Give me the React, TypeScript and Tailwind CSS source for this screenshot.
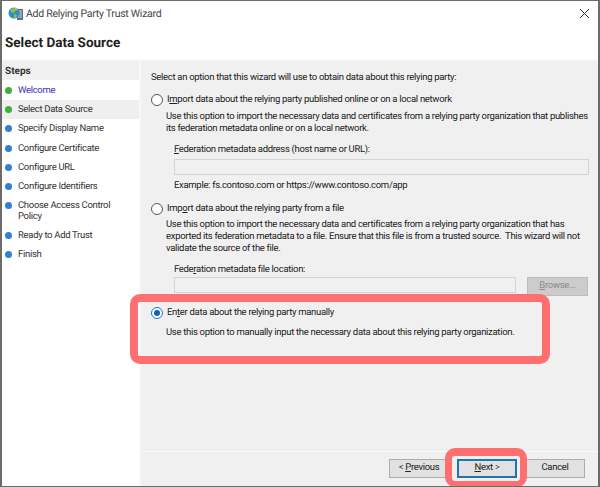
import React from 'react';

const steps = [
  { label: 'Welcome', color: 'bg-[#3fae3a]', text: 'text-[#3a2fc0]' },
  { label: 'Select Data Source', color: 'bg-[#3fae3a]', text: 'text-[#333]', active: true },
  { label: 'Specify Display Name', color: 'bg-[#2f7fd8]', text: 'text-[#333]' },
  { label: 'Configure Certificate', color: 'bg-[#2f7fd8]', text: 'text-[#333]' },
  { label: 'Configure URL', color: 'bg-[#2f7fd8]', text: 'text-[#333]' },
  { label: 'Configure Identifiers', color: 'bg-[#2f7fd8]', text: 'text-[#333]' },
  { label: 'Choose Access Control Policy', color: 'bg-[#2f7fd8]', text: 'text-[#333]' },
  { label: 'Ready to Add Trust', color: 'bg-[#2f7fd8]', text: 'text-[#333]' },
  { label: 'Finish', color: 'bg-[#2f7fd8]', text: 'text-[#333]' },
];

function Radio({ checked }: { checked?: boolean }) {
  return (
    <span className={`flex h-[12px] w-[12px] shrink-0 items-center justify-center rounded-full border bg-white ${checked ? 'border-[#1f74c8]' : 'border-[#555]'}`}>
      {checked && <span className="h-[6px] w-[6px] rounded-full bg-[#0f62b8]" />}
    </span>
  );
}

function Option({ checked, children }: { checked?: boolean; children: React.ReactNode }) {
  return (
    <div className="flex items-center gap-[4px] pl-[10px] leading-[14px]">
      <Radio checked={checked} />
      <span>{children}</span>
    </div>
  );
}

function WizardIcon() {
  return (
    <svg width="16" height="16" viewBox="0 0 16 16" className="shrink-0">
      <rect x="9" y="3" width="6" height="11" fill="#5b6f88" />
      <path d="M10 5h4M10 7h4M10 9h4M10 11h4" stroke="#c9d6e4" strokeWidth="1" />
      <circle cx="6" cy="7" r="5.5" fill="#2b8fc4" />
      <path d="M2 4l3-2 3 1-1 3-3 1zM6 8l3 1-1 3-2 1z" fill="#8cc04a" />
      <path d="M7 1.5l3 1-1 2-2-1z" fill="#e8b93a" />
    </svg>
  );
}

function Button({ children, primary, disabled, className = '' }: { children: React.ReactNode; primary?: boolean; disabled?: boolean; className?: string }) {
  const look = disabled
    ? 'border-[#bdbdbd] bg-[#cccccc] text-[#8a8a8a]'
    : primary
      ? 'border-2 border-[#1f74b8] bg-[#e1e1e1] text-[#222]'
      : 'border-[#adadad] bg-[#e1e1e1] text-[#222]';
  return <div className={`flex h-[19px] items-center justify-center border ${look} ${className}`}>{children}</div>;
}

function Field({ className = '' }: { className?: string }) {
  return <div className={`h-[16px] border border-[#d4d4d4] bg-[#f0f0f0] ${className}`} />;
}

export default function App() {
  return (
    <div className="relative flex h-[487px] w-[600px] flex-col overflow-hidden border-x-2 border-y border-[#6b6b6b] bg-white font-['Roboto',sans-serif] text-[9.5px] tracking-[-0.31px] text-[#222] [text-rendering:geometricPrecision]">
      <div className="flex h-[25px] shrink-0 items-center gap-[2px] pl-[6px] pr-[8px] text-[10.5px] tracking-[-0.27px] text-[#444]">
        <WizardIcon />
        <span className="flex-1">Add Relying Party Trust Wizard</span>
        <svg width="11" height="11" viewBox="0 0 11 11">
          <path d="M1 1l9 9M10 1l-9 9" stroke="#333" strokeWidth="1" />
        </svg>
      </div>
      <div className="flex h-[33px] shrink-0 items-center pl-[3px] pt-[2px] text-[13.5px] font-bold tracking-normal text-[#222]">Select Data Source</div>

      <div className="flex min-h-0 flex-1 bg-[#f7f7f7] pt-[2px]">
        <aside className="w-[137px] shrink-0 bg-white">
          <div className="flex h-[19px] items-center bg-[#f0f0f0] pl-[3px] pt-[2px] text-[10px] font-bold tracking-normal text-[#333]">Steps</div>
          <ul className="pt-[1px]">
            {steps.map((s) => (
              <li key={s.label} className={`flex pl-[3px] pt-[4px] leading-[11px] ${s.active ? 'bg-[#efefef]' : ''} ${s.label === 'Choose Access Control Policy' ? 'pb-[4px]' : 'h-[19.2px]'}`}>
                <span className={`mt-[2px] h-[7px] w-[7px] shrink-0 rounded-full ${s.color}`} />
                <span className={`max-w-[115px] pl-[6px] ${s.text}`}>{s.label}</span>
              </li>
            ))}
          </ul>
        </aside>

        <main className="ml-[2px] flex min-w-0 flex-1 flex-col bg-[#f0f0f0]">
          <div className="flex-1 pt-[10px] text-[#222]">
            <p className="pl-[10px] leading-[14px]">Select an option that this wizard will use to obtain data about this relying party:</p>

            <div className="mt-[8px]">
              <Option>I<span className="underline">m</span>port data about the relying party published online or on a local network</Option>
              <p className="mt-[4px] pl-[25px] pr-[8px] leading-[12px]">
                Use this option to import the necessary data and certificates from a relying party organization that publishes<br />its federation metadata online or on a local network.
              </p>
              <div className="mt-[8px] pl-[33px] pr-[9px]">
                <p className="leading-[14px]"><span className="underline">F</span>ederation metadata address (host name or URL):</p>
                <Field className="mt-[2px]" />
                <p className="mt-[4px] leading-[14px]">Example: fs.contoso.com or https://www.contoso.com/app</p>
              </div>
            </div>

            <div className="mt-[9px]">
              <Option>Imp<span className="underline">o</span>rt data about the relying party from a file</Option>
              <p className="mt-[3px] pl-[25px] pr-[8px] leading-[12px]">
                Use this option to import the necessary data and certificates from a relying party organization that has<br />exported its federation metadata to a file. Ensure that this file is from a trusted source.&nbsp; This wizard will not<br />validate the source of the file.
              </p>
              <div className="mt-[8px] pl-[33px] pr-[10px]">
                <p className="leading-[14px]">Fede<span className="underline">r</span>ation metadata file location:</p>
                <div className="flex items-start gap-[11px]">
                  <Field className="flex-1" />
                  <Button disabled className="w-[61px]"><span><span className="underline">B</span>rowse...</span></Button>
                </div>
              </div>
            </div>

            <div className="mt-[10px]">
              <Option checked>En<span className="underline">t</span>er data about the relying party manually</Option>
              <p className="mt-[6px] pl-[25px] leading-[14px]">Use this option to manually input the necessary data about this relying party organization.</p>
            </div>
          </div>

          <div className="flex h-[35px] shrink-0 items-center justify-end gap-[8px] border-t border-[#fafafa] pb-[2px] pr-[13px]">
            <Button className="w-[60px]"><span>&lt; <span className="underline">P</span>revious</span></Button>
            <Button primary className="w-[60px]"><span><span className="underline">N</span>ext &gt;</span></Button>
            <Button className="w-[60px]">Cancel</Button>
          </div>
        </main>
      </div>

      <div className="absolute left-[128px] top-[293px] h-[70px] w-[420px] rounded-[10px] border-[8px] border-[#ff6f70]" />
      <div className="absolute left-[443px] top-[447px] h-[39px] w-[82px] rounded-[10px] border-x-[7px] border-t-[8px] border-b-[6px] border-[#ff6f70]" />
    </div>
  );
}
